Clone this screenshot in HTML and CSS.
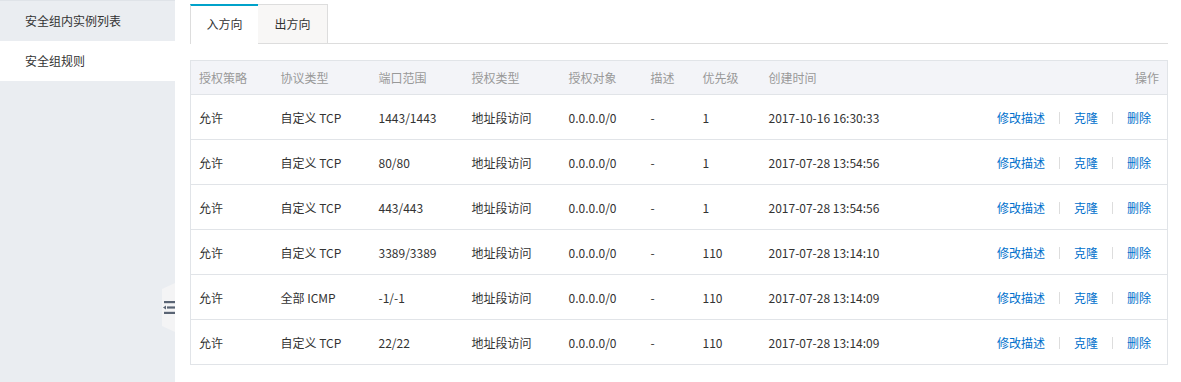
FILE: index.html
```html
<!DOCTYPE html>
<html lang="zh-CN">
<head>
    <meta charset="UTF-8">
    <title>安全组规则</title>
    <link rel="stylesheet" href="styles.css">
</head>
<body>
    <div class="sidebar">
        <div class="side-item">安全组内实例列表</div>
        <div class="side-item active">安全组规则</div>
        <div class="collapse-handle">
            <svg width="12" height="13" viewBox="0 0 12 13">
                <rect x="1" y="0" width="11" height="2.2" fill="#5a6474"/>
                <rect x="4" y="5.4" width="8" height="2.2" fill="#5a6474"/>
                <polygon points="0,6.5 3,4.5 3,8.5" fill="#5a6474"/>
                <rect x="1" y="10.8" width="11" height="2.2" fill="#5a6474"/>
            </svg>
        </div>
    </div>

    <div class="main">
        <div class="tabs">
            <div class="tab active">入方向</div>
            <div class="tab">出方向</div>
        </div>

        <table class="rules">
            <colgroup>
                <col style="width: 82px">
                <col style="width: 98px">
                <col style="width: 93px">
                <col style="width: 97px">
                <col style="width: 82px">
                <col style="width: 52px">
                <col style="width: 66px">
                <col style="width: 200px">
                <col>
            </colgroup>
            <thead>
                <tr>
                    <th>授权策略</th>
                    <th>协议类型</th>
                    <th>端口范围</th>
                    <th>授权类型</th>
                    <th>授权对象</th>
                    <th>描述</th>
                    <th>优先级</th>
                    <th>创建时间</th>
                    <th class="op">操作</th>
                </tr>
            </thead>
            <tbody>
                <tr>
                    <td>允许</td><td>自定义 TCP</td><td>1443/1443</td><td>地址段访问</td><td>0.0.0.0/0</td><td>-</td><td>1</td><td>2017-10-16 16:30:33</td>
                    <td class="op"><a>修改描述</a><span class="sep"></span><a>克隆</a><span class="sep"></span><a>删除</a></td>
                </tr>
                <tr>
                    <td>允许</td><td>自定义 TCP</td><td>80/80</td><td>地址段访问</td><td>0.0.0.0/0</td><td>-</td><td>1</td><td>2017-07-28 13:54:56</td>
                    <td class="op"><a>修改描述</a><span class="sep"></span><a>克隆</a><span class="sep"></span><a>删除</a></td>
                </tr>
                <tr>
                    <td>允许</td><td>自定义 TCP</td><td>443/443</td><td>地址段访问</td><td>0.0.0.0/0</td><td>-</td><td>1</td><td>2017-07-28 13:54:56</td>
                    <td class="op"><a>修改描述</a><span class="sep"></span><a>克隆</a><span class="sep"></span><a>删除</a></td>
                </tr>
                <tr>
                    <td>允许</td><td>自定义 TCP</td><td>3389/3389</td><td>地址段访问</td><td>0.0.0.0/0</td><td>-</td><td>110</td><td>2017-07-28 13:14:10</td>
                    <td class="op"><a>修改描述</a><span class="sep"></span><a>克隆</a><span class="sep"></span><a>删除</a></td>
                </tr>
                <tr>
                    <td>允许</td><td>全部 ICMP</td><td>-1/-1</td><td>地址段访问</td><td>0.0.0.0/0</td><td>-</td><td>110</td><td>2017-07-28 13:14:09</td>
                    <td class="op"><a>修改描述</a><span class="sep"></span><a>克隆</a><span class="sep"></span><a>删除</a></td>
                </tr>
                <tr>
                    <td>允许</td><td>自定义 TCP</td><td>22/22</td><td>地址段访问</td><td>0.0.0.0/0</td><td>-</td><td>110</td><td>2017-07-28 13:14:09</td>
                    <td class="op"><a>修改描述</a><span class="sep"></span><a>克隆</a><span class="sep"></span><a>删除</a></td>
                </tr>
            </tbody>
        </table>
    </div>
</body>
</html>
```

FILE: styles.css
```css
body {
    display: flex;
    margin: 0;
    height: 100vh;
    overflow: hidden;
    background: #fff;
    font-family: "Noto Sans CJK SC", "Liberation Sans", sans-serif;
    font-size: 12px;
    color: #333;
}

.sidebar {
    position: relative;
    flex: 0 0 175px;
    background: #eaedf1;
    border-top: 1px solid #dfe3e8;
    box-sizing: border-box;
}

.side-item {
    height: 40px;
    line-height: 40px;
    padding-left: 25px;
    color: #333;
}

.side-item.active {
    background: #fff;
}

.collapse-handle {
    position: absolute;
    right: 0;
    top: 282px;
    width: 13px;
    height: 49px;
    background: #f4f4f5;
    clip-path: polygon(100% 0, 0 12%, 0 88%, 100% 100%);
    display: flex;
    align-items: center;
    justify-content: flex-end;
}

.main {
    flex: 1;
    padding: 4px 13px 0 15px;
}

.tabs {
    display: flex;
    border-bottom: 1px solid #dddddd;
    height: 39px;
}

.tab {
    width: 70px;
    height: 39px;
    line-height: 38px;
    text-align: center;
    box-sizing: border-box;
    background: #f8f7f6;
    border: 1px solid #dddddd;
    border-left: none;
    border-bottom: none;
    color: #333;
}

.tab.active {
    width: 68px;
    background: #fff;
    border: none;
    border-left: 1px solid #dddddd;
    border-top: 2px solid #00a2ca;
    height: 40px;
    line-height: 36px;
    margin-bottom: -1px;
}

.rules {
    margin-top: 16px;
    width: 100%;
    border-collapse: collapse;
    table-layout: fixed;
    border: 1px solid #e1e4e8;
}

.rules th {
    height: 33px;
    background: #f3f4f8;
    color: #999;
    font-weight: normal;
    text-align: left;
    padding: 0 0 0 8px;
    border-bottom: 1px solid #e1e4e8;
}

.rules td {
    height: 44px;
    padding: 0 0 0 8px;
    border-bottom: 1px solid #e1e4e8;
    white-space: nowrap;
}

.rules tr:last-child td {
    border-bottom: none;
}

.rules th.op {
    text-align: right;
    padding-right: 8px;
}

.rules td.op {
    text-align: right;
    padding-right: 16px;
}

.rules a {
    color: #0070cc;
    cursor: pointer;
}

.sep {
    display: inline-block;
    width: 1px;
    height: 12px;
    background: #dddddd;
    margin: 0 14px;
    vertical-align: -1px;
}
```
